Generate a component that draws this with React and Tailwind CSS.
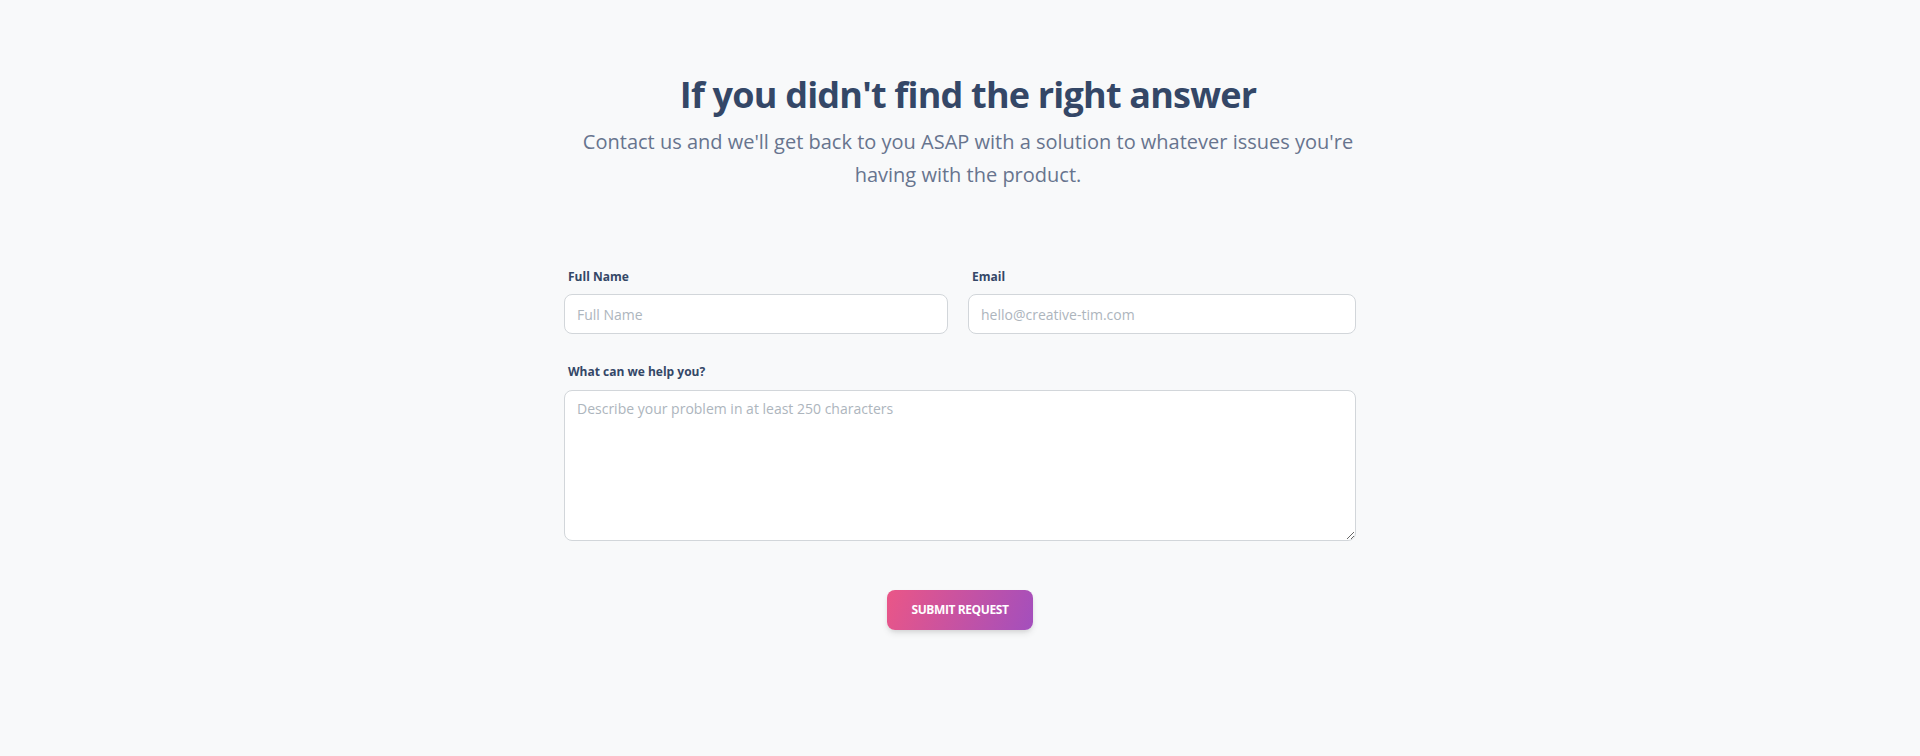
import React from 'react';

const Field = ({ label, placeholder, type = 'text', className = '' }) => (
    <div className={className}>
        <label className="mb-[9px] ml-1 block text-xs font-bold leading-4 text-[#344767]">{label}</label>
        <input
            type={type}
            placeholder={placeholder}
            className="block h-10 w-full rounded-lg border border-[#d2d6da] bg-white px-3 text-sm text-[#495057] placeholder:text-[#adb5bd] outline-none"
        />
    </div>
);

const App = () => {
    return (
        <div className="min-h-screen bg-[#f8f9fa] font-['Open_Sans',sans-serif]">
            <section className="pt-[72px]">
                <div className="mx-auto w-[816px] pl-4 text-center">
                    <h3 className="text-4xl font-bold leading-[45px] tracking-[-0.8px] text-[#344767]">If you didn't find the right answer</h3>
                    <p className="mt-2 text-xl leading-[33px] text-[#67748e]">
                        Contact us and we'll get back to you ASAP with a solution to whatever issues you're having with the product.
                    </p>
                </div>

                <form className="mx-auto mt-[78px] w-[792px]" onSubmit={(e) => e.preventDefault()}>
                    <div className="flex gap-5">
                        <Field label="Full Name" placeholder="Full Name" className="w-[384px]" />
                        <Field label="Email" type="email" placeholder="hello@creative-tim.com" className="w-[388px]" />
                    </div>

                    <div className="mt-[30px]">
                        <label className="mb-[10px] ml-1 block text-xs font-bold leading-4 text-[#344767]">What can we help you?</label>
                        <textarea
                            placeholder="Describe your problem in at least 250 characters"
                            className="block h-[151px] w-full rounded-lg border border-[#d2d6da] bg-white px-3 py-2 text-sm text-[#495057] placeholder:text-[#adb5bd] outline-none"
                        />
                    </div>

                    <div className="mt-[49px] flex justify-center">
                        <button
                            type="submit"
                            className="h-10 w-[146px] rounded-lg bg-[linear-gradient(110deg,#ea5687,#a34fbd)] text-xs font-bold uppercase tracking-[-0.4px] text-white shadow-[0_4px_7px_-1px_rgba(0,0,0,0.11),0_2px_4px_-1px_rgba(0,0,0,0.07)]"
                        >
                            Submit Request
                        </button>
                    </div>
                </form>
            </section>
        </div>
    );
};

export default App;
